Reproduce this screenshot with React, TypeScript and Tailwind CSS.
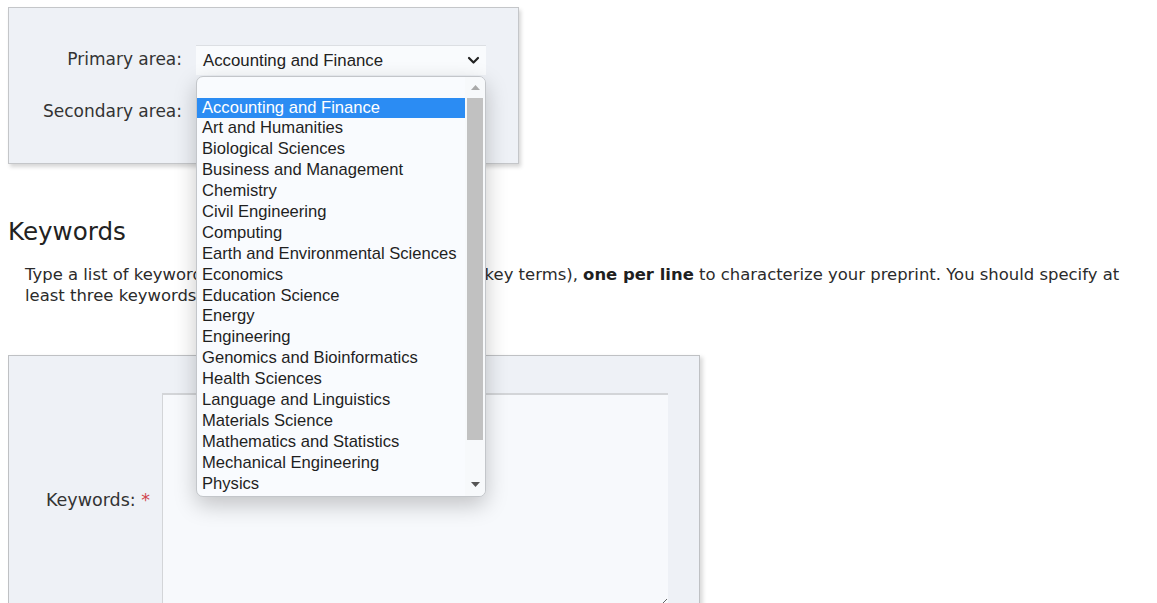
import React from "react";

const AREAS = [
  "Accounting and Finance",
  "Art and Humanities",
  "Biological Sciences",
  "Business and Management",
  "Chemistry",
  "Civil Engineering",
  "Computing",
  "Earth and Environmental Sciences",
  "Economics",
  "Education Science",
  "Energy",
  "Engineering",
  "Genomics and Bioinformatics",
  "Health Sciences",
  "Language and Linguistics",
  "Materials Science",
  "Mathematics and Statistics",
  "Mechanical Engineering",
  "Physics",
];

function Chevron() {
  return (
    <svg width="13" height="9" viewBox="0 0 13 9" className="shrink-0">
      <path d="M2 2 L6.5 6.5 L11 2" fill="none" stroke="#222" strokeWidth="2.2" strokeLinecap="round" strokeLinejoin="round" />
    </svg>
  );
}

function SelectBox({ value }: { value: string }) {
  return (
    <div className="w-[290px] h-[30px] bg-[#f9fbfd] border-t border-[#dcdfe3] flex items-center justify-between pl-[7px] pr-[6px] font-['Liberation_Sans',Arial,sans-serif] text-[16.8px] text-[#222]">
      <span>{value}</span>
      <Chevron />
    </div>
  );
}

function OptionList() {
  return (
    <div className="absolute left-0 top-[31px] w-[290px] h-[421px] bg-[#f9fbfe] border border-[#c3c6ca] rounded-[7px] shadow-[0_8px_22px_rgba(0,0,0,0.22)] overflow-hidden flex z-10 font-['Liberation_Sans',Arial,sans-serif] text-[16.6px] text-[#1f1f1f]">
      <div className="flex-1 flex flex-col">
        <div className="h-[20.5px]" />
        {AREAS.map((a, i) => (
          <div
            key={a}
            className={
              i === 0
                ? "h-[20.9px] leading-[20.9px] pl-[5px] bg-[#2b8cf3] text-white"
                : "h-[20.9px] leading-[20.9px] pl-[5px]"
            }
          >
            {a}
          </div>
        ))}
      </div>
      <div className="w-[20px] flex flex-col items-center bg-[#f7f9fb]">
        <div className="h-[21px] flex items-center justify-center">
          <svg width="9" height="5" viewBox="0 0 9 5">
            <path d="M0 5 L4.5 0 L9 5 Z" fill="#a9a9a9" />
          </svg>
        </div>
        <div className="w-[16px] h-[342px] bg-[#c1c1c1]" />
        <div className="flex-1 flex items-end justify-center pb-[9px]">
          <svg width="9" height="5" viewBox="0 0 9 5">
            <path d="M0 0 L4.5 5 L9 0 Z" fill="#555" />
          </svg>
        </div>
      </div>
    </div>
  );
}

export default function App() {
  return (
    <div className="relative w-[1157px] h-[603px] overflow-hidden bg-white font-['DejaVu_Sans',Verdana,sans-serif] text-[#333]">
      <div className="pt-[7px] px-[8px]">
        {/* subject areas */}
        <div className="w-[511px] h-[157px] bg-[#eef1f6] border border-[#c4c6c9] shadow-[2px_3px_4px_rgba(0,0,0,0.16)] pt-[37px] flex flex-col gap-[22px]">
          <div className="flex items-center gap-[14px]">
            <div className="w-[173px] text-right text-[17px]">Primary area:</div>
            <div className="relative">
              <SelectBox value="Accounting and Finance" />
              <OptionList />
            </div>
          </div>
          <div className="flex items-center gap-[14px]">
            <div className="w-[173px] text-right text-[17px]">Secondary area:</div>
            <SelectBox value="" />
          </div>
        </div>

        <h2 className="mt-[54px] text-[24.6px] leading-[28px] text-[#222]">Keywords</h2>
        <p className="mt-[18px] pl-[17px] pr-[10px] text-[16.45px] leading-[21px] text-[#2b2b2b]">
          Type a list of keywords (single words or key phrases, or key terms), <b className="font-bold text-[#1f1f1f]">one per line</b> to
          characterize your preprint. You should specify at least three keywords.
        </p>

        {/* keywords input */}
        <div className="mt-[49px] w-[692px] h-[300px] bg-[#eef1f6] border border-[#bfc1c4] shadow-[3px_2px_4px_rgba(0,0,0,0.14)] pt-[37px] flex gap-[12px]">
          <div className="w-[141px] h-[214px] flex items-center justify-end text-[17.5px]">
            Keywords:&nbsp;<span className="text-[#d0454c]">*</span>
          </div>
          <textarea className="w-[506px] h-[214px] bg-[#f7f9fc] border-t-2 border-l border-[#d3d5d8] outline-none" />
        </div>
      </div>
    </div>
  );
}
